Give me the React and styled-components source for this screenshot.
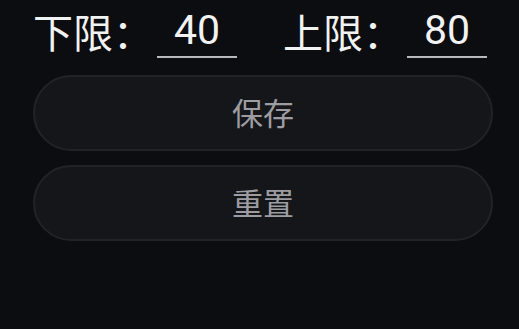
import React from "react";
import styled, { createGlobalStyle } from "styled-components";

const GlobalStyle = createGlobalStyle`
  html, body {
    margin: 0;
    padding: 0;
    background: #0c0d10;
  }
  body {
    font-family: Roboto, "Noto Sans CJK SC", sans-serif;
  }
`;

const Page = styled.div`
  width: 519px;
  height: 329px;
  background: #0c0d10;
  box-sizing: border-box;
  padding: 0 27px 0 33px;
  display: flex;
  flex-direction: column;
`;

const RangeRow = styled.div`
  display: flex;
  align-items: flex-end;
  gap: 46px;
  height: 58px;
`;

const Field = styled.div`
  display: flex;
  align-items: flex-end;
  gap: 4px;
`;

const Label = styled.span`
  font-family: "Noto Sans CJK SC", sans-serif;
  font-size: 40px;
  line-height: 48px;
  margin-bottom: 3px;
  color: #f2f2f2;
  white-space: nowrap;
`;

const NumberInput = styled.input`
  width: 80px;
  height: 52px;
  box-sizing: border-box;
  padding: 0 0 3px;
  margin: 0;
  border: none;
  border-bottom: 2px solid #b9b9bb;
  background: transparent;
  color: #f2f2f2;
  font-family: Roboto, sans-serif;
  font-size: 41px;
  text-align: center;
  outline: none;
`;

const Buttons = styled.div`
  display: flex;
  flex-direction: column;
  gap: 14px;
  margin-top: 17px;
  width: 460px;
`;

const PillButton = styled.button`
  height: 76px;
  box-sizing: border-box;
  border: 2px solid #222327;
  border-radius: 38px;
  background: #151619;
  color: #9d9da1;
  font-family: "Noto Sans CJK SC", sans-serif;
  font-size: 31px;
  cursor: pointer;
  padding: 0 0 4px;
`;

export default function App() {
  return (
    <>
      <GlobalStyle />
      <Page>
        <RangeRow>
          <Field>
            <Label>下限：</Label>
            <NumberInput defaultValue="40" />
          </Field>
          <Field>
            <Label>上限：</Label>
            <NumberInput defaultValue="80" />
          </Field>
        </RangeRow>
        <Buttons>
          <PillButton>保存</PillButton>
          <PillButton>重置</PillButton>
        </Buttons>
      </Page>
    </>
  );
}
